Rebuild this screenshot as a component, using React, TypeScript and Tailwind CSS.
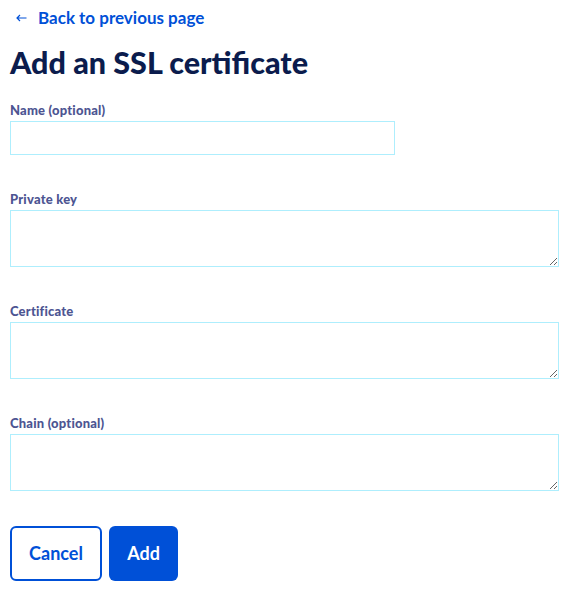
import React from "react";

const font = { fontFamily: '"Lato", "Noto Sans", sans-serif' };

function Field({ label, multiline, id }: { label: string; multiline?: boolean; id: string }) {
  return (
    <div className="flex flex-col">
      <label htmlFor={id} className="text-[13px] leading-[18px] font-black tracking-[0.2px] text-[#4d5592] mb-[2px]">
        {label}
      </label>
      {multiline ? (
        <textarea id={id} className="w-[549px] h-[57px] border border-[#aeeefd] bg-white outline-none" />
      ) : (
        <input id={id} type="text" className="w-[385px] h-[34px] border border-[#aeeefd] bg-white outline-none" />
      )}
    </div>
  );
}

export default function App() {
  return (
    <div className="min-h-screen bg-white px-[10px] pt-[8px]" style={font}>
      <a href="#" className="flex items-center gap-[11px] pl-[6px] text-[#0050d7] font-bold text-[17px] leading-5">
        <svg width="11" height="8" viewBox="0 0 11 8" fill="none" stroke="#0050d7" strokeWidth="1.2">
          <path d="M10.5 4H1M4 1L1 4l3 3" />
        </svg>
        Back to previous page
      </a>
      <h1 className="mt-[16px] text-[30.5px] leading-9 font-black text-[#0b1c4d]">Add an SSL certificate</h1>
      <div className="mt-[21px] flex flex-col gap-[35px]">
        <Field id="name" label="Name (optional)" />
        <Field id="key" label="Private key" multiline />
        <Field id="cert" label="Certificate" multiline />
        <Field id="chain" label="Chain (optional)" multiline />
      </div>
      <div className="mt-[35px] flex gap-[7px]">
        <button className="w-[92px] h-[55px] rounded-[6px] border-2 border-[#0050d7] text-[#0050d7] font-bold text-[18px] bg-white">
          Cancel
        </button>
        <button className="w-[69px] h-[55px] rounded-[6px] bg-[#0050d7] text-white font-bold text-[18px]">
          Add
        </button>
      </div>
    </div>
  );
}
